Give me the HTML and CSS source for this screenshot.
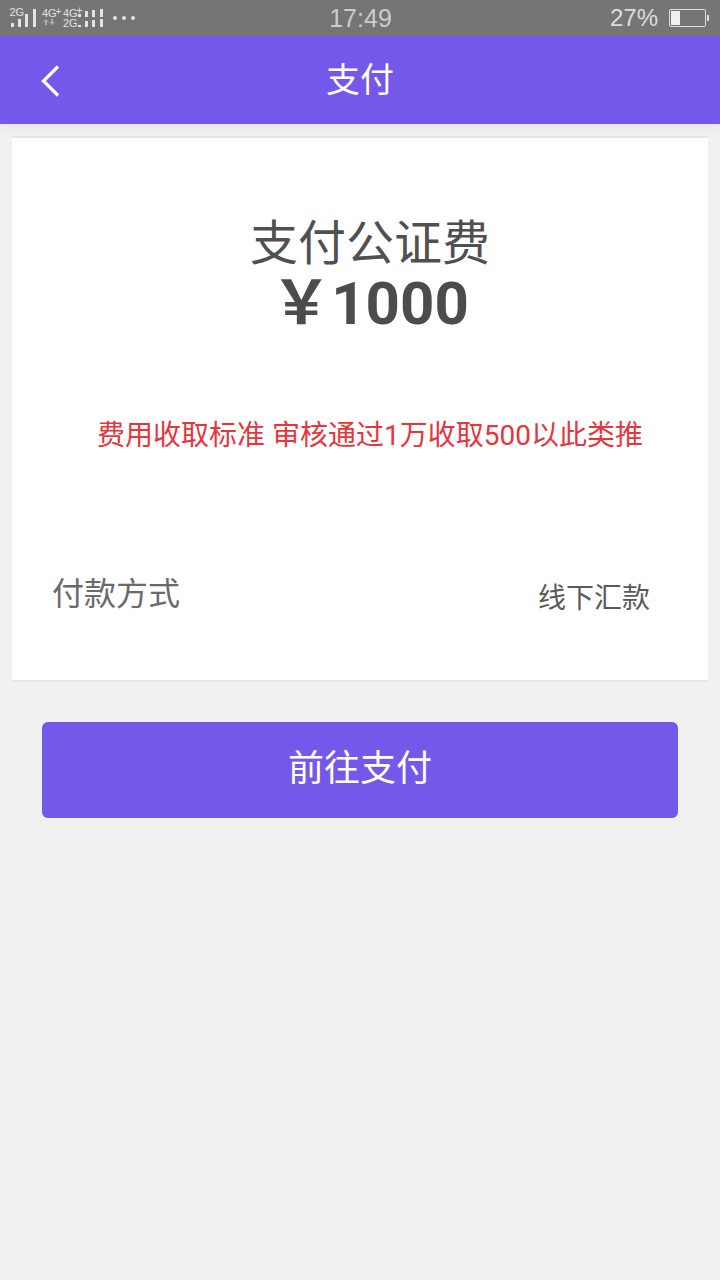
FILE: index.html
```html
<!DOCTYPE html>
<html lang="zh-CN">
<head>
    <meta charset="UTF-8">
    <meta name="viewport" content="width=device-width, initial-scale=1.0">
    <title>支付</title>
    <link rel="stylesheet" href="styles.css">
</head>
<body>
    <div class="status-bar">
        <div class="status-left">
            <svg class="signal-icons" width="140" height="36" viewBox="0 0 140 36">
                <text x="9.5" y="16" class="net">2G</text>
                <rect x="11" y="23" width="3" height="4"/>
                <rect x="18" y="19" width="3" height="8"/>
                <rect x="25" y="14" width="3" height="13"/>
                <rect x="33" y="9" width="3" height="18"/>
                <text x="42" y="17" class="net">4G</text>
                <text x="55.5" y="15" class="plus">+</text>
                <path class="dim" d="M46 19l3 3h-2v3h-2v-3h-2zM52 25l3-3h-2v-3h-2v3h-2z"/>
                <text x="63" y="17" class="net">4G</text>
                <text x="76.5" y="14" class="plus">+</text>
                <text x="63" y="27" class="net">2G</text>
                <rect x="78" y="14" width="3" height="3"/>
                <rect x="78" y="25" width="3" height="2"/>
                <rect x="85" y="11" width="3" height="6"/>
                <rect x="85" y="21" width="3" height="6"/>
                <rect x="92" y="10" width="3" height="7"/>
                <rect x="92" y="20" width="3" height="7"/>
                <rect x="100" y="9" width="3" height="8"/>
                <rect x="100" y="19" width="3" height="8"/>
                <circle cx="115" cy="18" r="2"/>
                <circle cx="124" cy="18" r="2"/>
                <circle cx="133" cy="18" r="2"/>
            </svg>
        </div>
        <div class="status-time">17:49</div>
        <div class="status-right">
            <span class="battery-text">27%</span>
            <div class="battery"><div class="battery-level"></div></div>
            <div class="battery-tip"></div>
        </div>
    </div>

    <div class="header">
        <svg class="back" width="24" height="36" viewBox="0 0 24 36">
            <path d="M20 3.500L5.500 18l14.500 14.500" fill="none" stroke="#fff" stroke-width="3.200"/>
        </svg>
        <div class="header-title">支付</div>
    </div>

    <div class="card">
        <div class="pay-title">支付公证费</div>
        <div class="pay-amount"><span class="yen">&#xFFE5;</span>1000</div>
        <div class="notice">费用收取标准 审核通过1万收取500以此类推</div>
        <div class="pay-row">
            <span class="pay-label">付款方式</span>
            <span class="pay-value">线下汇款</span>
        </div>
    </div>

    <div class="pay-button"><span class="pay-button-text">前往支付</span></div>
</body>
</html>
```

FILE: styles.css
```css
* {
    box-sizing: border-box;
}
body {
    margin: 0;
    height: 1280px;
    overflow: hidden;
    background-color: #f1f1f1;
    font-family: Roboto, "Noto Sans CJK SC", sans-serif;
}
.status-bar {
    height: 36px;
    background-color: #757575;
    color: #ddd;
    display: flex;
    align-items: center;
}
.status-left {
    flex: 1;
    height: 36px;
}
.signal-icons {
    display: block;
    fill: #e2e2e2;
}
.signal-icons .net {
    font-family: "Liberation Sans", sans-serif;
    font-size: 11px;
}
.signal-icons .plus {
    font-family: "Liberation Sans", sans-serif;
    font-size: 10px;
}
.signal-icons .dim {
    fill: #aaa;
}
.status-time {
    font-family: "Liberation Sans", sans-serif;
    font-size: 25px;
    color: #ccc;
    width: 120px;
    text-align: center;
    padding-left: 12px;
}
.status-right {
    flex: 1;
    display: flex;
    align-items: center;
    justify-content: flex-end;
    padding-right: 11px;
}
.battery-text {
    font-family: "Liberation Sans", sans-serif;
    font-size: 24px;
    color: #ddd;
    margin-right: 11px;
}
.battery {
    width: 37px;
    height: 18px;
    border: 1px solid #ddd;
    border-radius: 2px;
    padding: 1px;
}
.battery-level {
    width: 9px;
    height: 100%;
    background-color: #f0f0f0;
}
.battery-tip {
    width: 2px;
    height: 6px;
    margin-left: 1px;
    background-color: #ddd;
}
.header {
    height: 88px;
    background-color: #7358ea;
    display: flex;
    align-items: center;
    justify-content: center;
    position: relative;
    box-shadow: 0 4px 10px rgba(0, 0, 0, 0.05);
}
.back {
    position: absolute;
    left: 38px;
    top: 27px;
}
.header-title {
    color: #fff;
    font-size: 34px;
    margin-top: -6px;
}
.card {
    margin: 12px 12px 0;
    height: 546px;
    background-color: #fff;
    border-top: 2px solid #e6e6e6;
    border-bottom: 2px solid #e6e6e6;
    padding: 80px 40px 0;
}
.pay-title {
    font-size: 48px;
    line-height: 52px;
    color: #505050;
    text-align: center;
    padding-left: 20px;
}
.pay-amount {
    font-size: 60px;
    line-height: 68px;
    font-weight: bold;
    color: #4c4c4c;
    text-align: center;
    padding-left: 20px;
}
.yen {
    font-family: "Noto Sans CJK SC", sans-serif;
    line-height: 0;
}
.notice {
    margin-top: 78px;
    padding-left: 45px;
    font-size: 28px;
    line-height: 40px;
    color: #e8343a;
    white-space: nowrap;
}
.pay-row {
    margin-top: 116px;
    display: flex;
    justify-content: space-between;
    align-items: center;
    padding-right: 18px;
}
.pay-label {
    font-size: 32px;
    color: #6a6a6a;
    margin-top: -6px;
}
.pay-value {
    font-size: 28px;
    color: #5a5a5a;
    margin-top: 4px;
}
.pay-button {
    margin: 40px 42px 0;
    height: 96px;
    background-color: #7358ea;
    border-radius: 6px;
    color: #fff;
    font-size: 36px;
    display: flex;
    align-items: center;
    justify-content: center;
}
.pay-button-text {
    margin-top: -10px;
}
```
